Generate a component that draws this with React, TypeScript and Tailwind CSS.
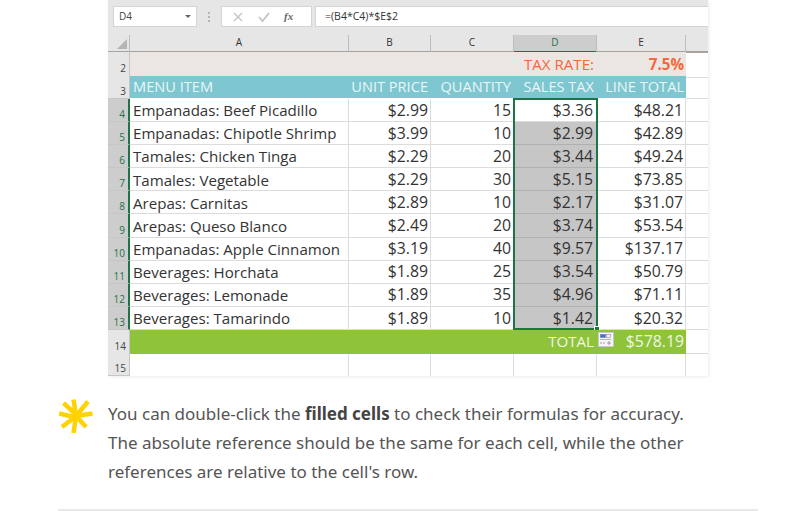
const rows = [
  ['4', 'Empanadas: Beef Picadillo', '$2.99', '15', '$3.36', '$48.21'],
  ['5', 'Empanadas: Chipotle Shrimp', '$3.99', '10', '$2.99', '$42.89'],
  ['6', 'Tamales: Chicken Tinga', '$2.29', '20', '$3.44', '$49.24'],
  ['7', 'Tamales: Vegetable', '$2.29', '30', '$5.15', '$73.85'],
  ['8', 'Arepas: Carnitas', '$2.89', '10', '$2.17', '$31.07'],
  ['9', 'Arepas: Queso Blanco', '$2.49', '20', '$3.74', '$53.54'],
  ['10', 'Empanadas: Apple Cinnamon', '$3.19', '40', '$9.57', '$137.17'],
  ['11', 'Beverages: Horchata', '$1.89', '25', '$3.54', '$50.79'],
  ['12', 'Beverages: Lemonade', '$1.89', '35', '$4.96', '$71.11'],
  ['13', 'Beverages: Tamarindo', '$1.89', '10', '$1.42', '$20.32'],
];

const rowGrid = 'grid grid-cols-[22px_219px_82px_83px_83px_89px_22px]';

function RowNum({ n, active, className = '' }: { n: string; active?: boolean; className?: string }) {
  return (
    <div
      className={`flex items-end justify-end border-b border-[#c6c6c6] pr-[3px] text-[10px] leading-[13px] ${
        active ? 'border-r-2 border-r-[#217346] bg-[#cdcdcd] text-[#217346]' : 'border-r border-r-[#c6c6c6] bg-[#e6e6e6] text-[#444]'
      } ${className}`}
    >
      {n}
    </div>
  );
}

function Cell({ children, className = '' }: { children?: React.ReactNode; className?: string }) {
  return (
    <div className={`flex items-center justify-end overflow-hidden whitespace-nowrap border-b border-r border-[#dcdcdc] pt-px text-[#333] ${className}`}>
      {children}
    </div>
  );
}

function ColHead({ label, active }: { label: string; active?: boolean }) {
  return (
    <div
      className={`flex items-center justify-center border-r border-[#bdbdbd] pb-px text-[10px] ${
        active ? 'border-b-2 border-b-[#217346] bg-[#cdcdcd] text-[#217346]' : 'border-b-2 border-b-[#a8a29e] text-[#333]'
      }`}
    >
      {label}
    </div>
  );
}

function Toolbar() {
  return (
    <div className="flex h-[35px] items-start bg-[#e6e6e6] pt-[6px] pl-[5px]">
      <div className="flex h-[21px] w-[84px] items-center justify-between border border-[#d4d4d4] bg-white pr-[5px] pl-[5px] text-[10px] text-[#444]">
        <span>D4</span>
        <span className="h-0 w-0 border-x-[3px] border-t-[3px] border-x-transparent border-t-[#666]" />
      </div>
      <div className="mt-[6px] ml-[11px] flex flex-col gap-[2px]">
        <span className="h-[2px] w-[2px] bg-[#b5b5b5]" />
        <span className="h-[2px] w-[2px] bg-[#b5b5b5]" />
        <span className="h-[2px] w-[2px] bg-[#b5b5b5]" />
      </div>
      <div className="ml-[11px] flex h-[21px] w-[91px] items-center border border-[#d4d4d4] bg-white pl-[10px]">
        <svg width="12" height="12" viewBox="0 0 12 12" className="text-[#c4c4c4]">
          <path d="M2 2l8 8M10 2l-8 8" stroke="currentColor" strokeWidth="1.4" fill="none" />
        </svg>
        <svg width="14" height="12" viewBox="0 0 14 12" className="ml-[13px] text-[#c4c4c4]">
          <path d="M2 6l3.5 4L12 2" stroke="currentColor" strokeWidth="1.8" fill="none" />
        </svg>
        <span className="ml-[13px] font-['Liberation_Serif',serif] text-[11px] font-bold italic text-[#666]">fx</span>
      </div>
      <div className="ml-[3px] flex h-[21px] flex-1 items-center border-y border-l border-[#d4d4d4] bg-white pl-[9px] text-[10.5px] text-[#333]">
        =(B4*C4)*$E$2
      </div>
    </div>
  );
}

function Sheet() {
  return (
    <div className="ml-[108px] w-[600px] bg-white font-['Open_Sans',sans-serif] shadow-[1px_1px_3px_rgba(0,0,0,0.08)]">
      <Toolbar />
      <div className={`${rowGrid} h-[17px] bg-[#e6e6e6]`}>
        <div className="flex items-end justify-end border-r border-b-2 border-[#a8a29e] border-r-[#bdbdbd] p-[2px]">
          <span className="h-0 w-0 border-b-[10px] border-l-[10px] border-b-[#b5b5b5] border-l-transparent" />
        </div>
        <ColHead label="A" />
        <ColHead label="B" />
        <ColHead label="C" />
        <ColHead label="D" active />
        <ColHead label="E" />
        <div className="border-b-2 border-[#a8a29e]" />
      </div>

      <div className={`${rowGrid} h-[24px]`}>
        <RowNum n="2" className="pb-[2px]" />
        <div className="col-span-3 mb-[2px] bg-[#ebe6e2]" />
        <div className="mb-[2px] flex items-center justify-end bg-[#ebe6e2] pt-px pr-[3px] text-[15.1px] text-[#f4683c]">TAX RATE:</div>
        <div className="mb-[2px] flex items-center justify-end bg-[#ebe6e2] pt-px pr-[2px] text-[15.1px] font-bold text-[#f4683c]">7.5%</div>
        <div className="border-b border-[#dcdcdc]" />
      </div>

      <div className={`${rowGrid} h-[23px]`}>
        <RowNum n="3" />
        <div className="col-span-5 mb-px grid grid-cols-[219px_82px_83px_83px_89px] whitespace-nowrap bg-[#7ec6d0] text-[14.6px] text-[#eaf6f8]">
          <div className="flex items-center pl-[3px]">MENU ITEM</div>
          <div className="flex items-center justify-end pr-[3px]">UNIT PRICE</div>
          <div className="flex items-center justify-end pr-[3px]">QUANTITY</div>
          <div className="flex items-center justify-end pr-[3px]">SALES TAX</div>
          <div className="flex items-center justify-end pr-[2px]">LINE TOTAL</div>
        </div>
        <div className="border-b border-[#dcdcdc]" />
      </div>

      <div className="relative">
        {rows.map((r, i) => (
          <div key={r[0]} className={`${rowGrid} h-[23.1px]`}>
            <RowNum n={r[0]} active />
            <Cell className="justify-start pl-[3px] text-[15.1px]">{r[1]}</Cell>
            <Cell className="pr-[2px] text-[15.8px]">{r[2]}</Cell>
            <Cell className="pr-[2px] text-[15.8px]">{r[3]}</Cell>
            <Cell className={`pr-[3px] text-[15.8px] ${i > 0 ? 'border-b-[#b0b0b0] border-r-[#b0b0b0] bg-[#c6c6c6]' : ''}`}>{r[4]}</Cell>
            <Cell className="pr-[2px] text-[15.8px]">{r[5]}</Cell>
            <div className="border-b border-[#dcdcdc]" />
          </div>
        ))}
        {/* selection D4:D13 */}
        <div className="pointer-events-none absolute top-[-1px] bottom-0 left-[405px] w-[85px] border-2 border-[#217346]">
          <span className="absolute right-[-4px] bottom-[-4px] h-[6px] w-[6px] border border-white bg-[#217346]" />
        </div>
      </div>

      <div className={`${rowGrid} h-[23px]`}>
        <RowNum n="14" />
        <div className="col-span-5 relative grid grid-cols-[384px_83px_89px] bg-[#8fc33a] text-[#f0f7e2]">
          <div />
          <div className="flex items-center justify-end pr-[3px] text-[15.1px]">TOTAL</div>
          <div className="flex items-center justify-end pr-[2px] text-[15.8px]">$578.19</div>
          <div className="absolute top-[2px] left-[468px] flex h-[15px] w-[16px] items-center justify-center border border-[#c8c8c8] bg-[#f5f5f5]">
            <svg width="12" height="11" viewBox="0 0 12 11">
              <rect x="0.5" y="0.5" width="5" height="3" fill="#4472c4" stroke="#4472c4" strokeWidth="0.5" />
              <rect x="6.5" y="0.5" width="4" height="3" fill="none" stroke="#999" strokeWidth="0.7" />
              <path d="M0 5.5h11" stroke="#999" strokeWidth="0.7" />
              <path d="M0 9h2M3 9h2M7 9h4M9 7v4" stroke="#888" strokeWidth="0.8" />
            </svg>
          </div>
        </div>
        <div className="border-b border-[#dcdcdc]" />
      </div>

      <div className={`${rowGrid} h-[23px]`}>
        <RowNum n="15" />
        <div className="border-r border-[#dcdcdc]" />
        <div className="border-r border-[#dcdcdc]" />
        <div className="border-r border-[#dcdcdc]" />
        <div className="border-r border-[#dcdcdc]" />
        <div className="border-r border-[#dcdcdc]" />
        <div />
      </div>
    </div>
  );
}

export default function App() {
  return (
    <div className="h-[511px] w-[793px] overflow-hidden bg-white">
      <Sheet />
      <div className="mt-[23px] ml-[59px] flex w-[640px]">
        <svg width="34" height="35" viewBox="0 0 34 35" className="shrink-0">
          <g stroke="#ffd200" strokeWidth="4.5" fill="none">
            <path d="M14.5 0.5L17 17" />
            <path d="M0 14.5L17 18.5" />
            <path d="M4.5 4L18.5 17" />
            <path d="M14.5 34L17 17" />
            <path d="M33.5 14.5L17 17" />
            <path d="M29 2.5L17 17" />
            <path d="M3 28L17 17" />
            <path d="M27 28L17 17" />
          </g>
        </svg>
        <p className="ml-[15px] font-['Noto_Sans',sans-serif] text-[17px] leading-[29px] text-[#555]">
          You can double-click the <strong className="font-bold text-[#444]">filled cells</strong> to check their formulas for accuracy. The absolute reference should be the same for each cell, while the other references are relative to the cell's row.
        </p>
      </div>
      <div className="mt-[23px] ml-[58px] h-[3px] w-[700px] bg-[#e8e8e8]" />
    </div>
  );
}
